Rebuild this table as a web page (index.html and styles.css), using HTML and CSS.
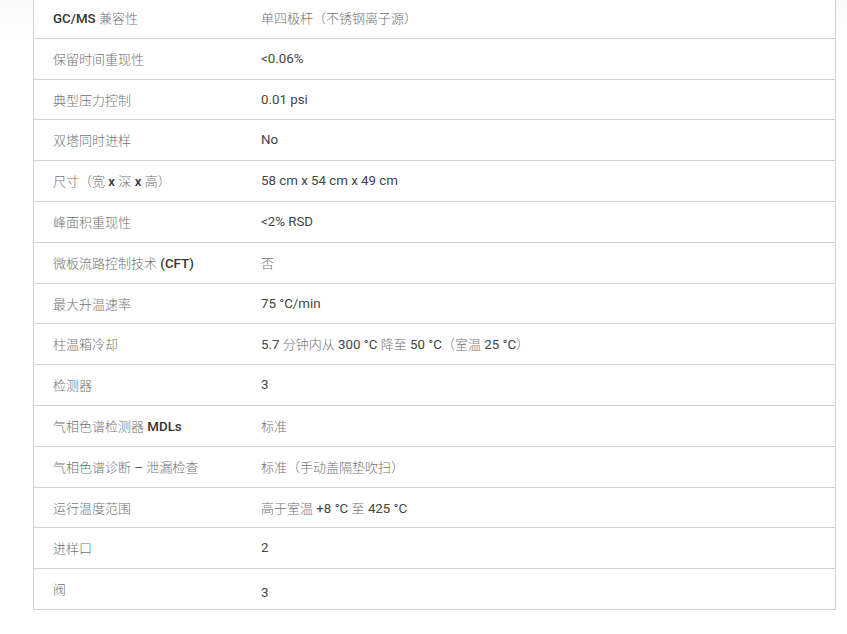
FILE: index.html
```html
<!DOCTYPE html>
<html lang="zh-CN">
<head>
<meta charset="utf-8">
<title>规格</title>
<link rel="stylesheet" href="styles.css">
</head>
<body>
<div class="spec">
  <div class="row"><div class="k">GC/MS <span class="zh">兼容性</span></div><div class="v"><span class="zh">单四极杆（不锈钢离子源）</span></div></div>
  <div class="row"><div class="k"><span class="zh">保留时间重现性</span></div><div class="v">&lt;0.06%</div></div>
  <div class="row"><div class="k"><span class="zh">典型压力控制</span></div><div class="v">0.01 psi</div></div>
  <div class="row"><div class="k"><span class="zh">双塔同时进样</span></div><div class="v">No</div></div>
  <div class="row"><div class="k"><span class="zh">尺寸（宽</span> x <span class="zh">深</span> x <span class="zh">高）</span></div><div class="v">58 cm x 54 cm x 49 cm</div></div>
  <div class="row"><div class="k"><span class="zh">峰面积重现性</span></div><div class="v">&lt;2% RSD</div></div>
  <div class="row"><div class="k"><span class="zh">微板流路控制技术</span> (CFT)</div><div class="v"><span class="zh">否</span></div></div>
  <div class="row"><div class="k"><span class="zh">最大升温速率</span></div><div class="v">75 °C/min</div></div>
  <div class="row"><div class="k"><span class="zh">柱温箱冷却</span></div><div class="v">5.7 <span class="zh">分钟内从</span> 300 °C <span class="zh">降至</span> 50 °C<span class="zh">（室温</span> 25 °C<span class="zh">）</span></div></div>
  <div class="row"><div class="k"><span class="zh">检测器</span></div><div class="v">3</div></div>
  <div class="row"><div class="k"><span class="zh">气相色谱检测器</span> MDLs</div><div class="v"><span class="zh">标准</span></div></div>
  <div class="row"><div class="k"><span class="zh">气相色谱诊断</span> <span class="dash">–</span> <span class="zh">泄漏检查</span></div><div class="v"><span class="zh">标准（手动盖隔垫吹扫）</span></div></div>
  <div class="row"><div class="k"><span class="zh">运行温度范围</span></div><div class="v"><span class="zh">高于室温</span> +8 °C <span class="zh">至</span> 425 °C</div></div>
  <div class="row"><div class="k"><span class="zh">进样口</span></div><div class="v">2</div></div>
  <div class="row"><div class="k"><span class="zh">阀</span></div><div class="v low">3</div></div>
</div>
</body>
</html>
```
FILE: styles.css
```css
html, body {
  margin: 0;
  padding: 0;
}
body {
  background: linear-gradient(#fafafa 0, #fcfcfc 28px, #ffffff 36px);
  font-family: "Roboto", "Noto Sans CJK SC", sans-serif;
  font-size: 13.3px;
  color: #3a3a3a;
  min-height: 634px;
}
.spec {
  margin: -3px 0 0 33px;
  width: 801px;
  border: 1px solid #d2d2d2;
  background: #fff;
}
.row {
  display: flex;
  box-sizing: border-box;
  height: 40.8px;
  border-bottom: 1px solid #d2d2d2;
  overflow: hidden;
}
.row:last-child {
  border-bottom: none;
  height: 39.8px;
}
.k, .v {
  padding: 10px 19px 0;
  line-height: 19px;
  white-space: nowrap;
}
.k {
  width: 170px;
  flex: 0 0 170px;
  font-weight: 500;
  color: #333;
}
.v {
  flex: 1;
  color: #444;
}
.v.low {
  padding-top: 14px;
}
.zh {
  font-family: "Noto Sans CJK SC", sans-serif;
  font-size: 13px;
  font-weight: 300;
  line-height: 19px;
  color: #727272;
}
.dash {
  font-weight: 400;
  color: #555;
}
```
